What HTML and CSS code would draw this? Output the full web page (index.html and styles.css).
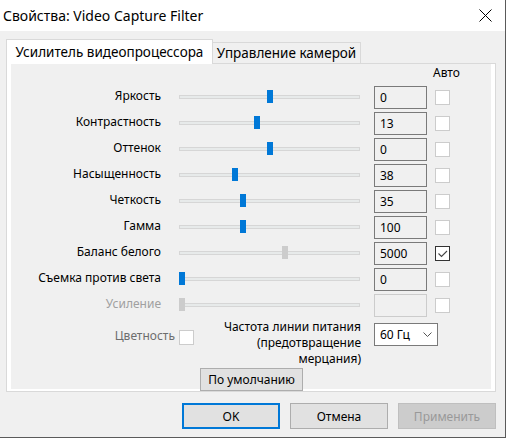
FILE: index.html
```html
<!DOCTYPE html>
<html lang="ru">
<head>
<meta charset="utf-8">
<title>Свойства: Video Capture Filter</title>
<link rel="stylesheet" href="styles.css">
</head>
<body>
<div class="window">
  <div class="titlebar">
    <span class="title">Свойства: Video Capture Filter</span>
    <svg class="close" width="13" height="13" viewBox="0 0 13 13"><path d="M0.5 0.5 L12.5 12.5 M12.5 0.5 L0.5 12.5" stroke="#000" stroke-width="1" fill="none"/></svg>
  </div>
  <div class="client">
    <div class="tabs">
      <div class="tab active">Усилитель видеопроцессора</div>
      <div class="tab">Управление камерой</div>
    </div>
    <div class="panel">
      <div class="page">
        <div class="auto-head">Авто</div>
        <div class="rows">
          <div class="row"><div class="label">Яркость</div><div class="slider"><div class="track"><div class="thumb" style="--v:50"></div></div></div><div class="edit">0</div><div class="cb"></div></div>
          <div class="row"><div class="label">Контрастность</div><div class="slider"><div class="track"><div class="thumb" style="--v:43"></div></div></div><div class="edit">13</div><div class="cb"></div></div>
          <div class="row"><div class="label">Оттенок</div><div class="slider"><div class="track"><div class="thumb" style="--v:50"></div></div></div><div class="edit">0</div><div class="cb"></div></div>
          <div class="row"><div class="label">Насыщенность</div><div class="slider"><div class="track"><div class="thumb" style="--v:30"></div></div></div><div class="edit">38</div><div class="cb"></div></div>
          <div class="row"><div class="label">Четкость</div><div class="slider"><div class="track"><div class="thumb" style="--v:35"></div></div></div><div class="edit">35</div><div class="cb"></div></div>
          <div class="row"><div class="label">Гамма</div><div class="slider"><div class="track"><div class="thumb" style="--v:35"></div></div></div><div class="edit">100</div><div class="cb"></div></div>
          <div class="row"><div class="label">Баланс белого</div><div class="slider"><div class="track"><div class="thumb off" style="--v:59"></div></div></div><div class="edit">5000</div><div class="cb checked"><svg width="13" height="13" viewBox="0 0 13 13"><path d="M2.5 6.5 L5.5 9.5 L11 4" stroke="#444" stroke-width="1.1" fill="none"/></svg></div></div>
          <div class="row"><div class="label">Съемка против света</div><div class="slider"><div class="track"><div class="thumb" style="--v:0"></div></div></div><div class="edit">0</div><div class="cb"></div></div>
          <div class="row"><div class="label disabled">Усиление</div><div class="slider"><div class="track"><div class="thumb off" style="--v:0"></div></div></div><div class="edit disabled"></div><div class="cb"></div></div>
        </div>
        <div class="bottom">
          <div class="chroma"><span class="chroma-label">Цветность</span><div class="cb"></div></div>
          <div class="freq">Частота линии питания<br>(предотвращение<br>мерцания)</div>
          <div class="select"><span>60 Гц</span><svg class="chev" width="9" height="5" viewBox="0 0 9 5"><path d="M0.5 0.5 L4.5 4.5 L8.5 0.5" stroke="#555" stroke-width="1" fill="none"/></svg></div>
        </div>
        <button class="btn defaults">По умолчанию</button>
      </div>
    </div>
    <div class="actions">
      <button class="btn primary">OK</button>
      <button class="btn">Отмена</button>
      <button class="btn disabled-btn">Применить</button>
    </div>
  </div>
</div>
</body>
</html>
```
FILE: styles.css
```css
html, body {
  margin: 0;
  padding: 0;
  background: #ffffff;
}
body {
  font-family: "Noto Sans", "Open Sans", sans-serif;
  font-size: 12px;
  color: #000;
}
.window {
  width: 505px;
  height: 437px;
  border-right: 1px solid #5a5a5a;
  border-bottom: 1px solid #5a5a5a;
  display: flex;
  flex-direction: column;
}
.titlebar {
  height: 31px;
  background: #ffffff;
  display: flex;
  align-items: center;
  flex-shrink: 0;
}
.title {
  font-size: 14px;
  padding-left: 3px;
  line-height: 30px;
}
.close {
  margin-left: auto;
  margin-right: 13px;
  margin-top: -1px;
}
.client {
  flex: 1;
  background: #f0f0f0;
  padding: 8px 9px 0 6px;
}
.tabs {
  display: flex;
  align-items: flex-end;
  height: 25px;
  margin-bottom: -1px;
  position: relative;
  z-index: 1;
  font-size: 13.5px;
}
.tab {
  box-sizing: border-box;
  height: 22px;
  width: 148px;
  border: 1px solid #d9d9d9;
  border-left: none;
  background: #f0f0f0;
  display: flex;
  align-items: center;
  justify-content: center;
  white-space: nowrap;
}
.tab.active {
  height: 25px;
  width: 207px;
  border: 1px solid #d9d9d9;
  border-bottom: none;
  background: #ffffff;
  padding-bottom: 1px;
}
.panel {
  box-sizing: border-box;
  height: 329px;
  border: 1px solid #d9d9d9;
  background: #ffffff;
  padding: 0 4px 2px 4px;
}
.page {
  height: 100%;
  background: #f0f0f0;
}
.auto-head {
  height: 22px;
  line-height: 18px;
  padding-left: 422px;
}
.row {
  display: flex;
  align-items: center;
  height: 23px;
  margin-bottom: 3px;
}
.label {
  width: 150px;
  text-align: right;
  white-space: nowrap;
  line-height: 20px;
  align-self: flex-start;
}
.label.disabled {
  color: #a0a0a0;
}
.slider {
  margin-left: 18px;
  width: 181px;
  display: flex;
  align-items: center;
  height: 23px;
}
.track {
  position: relative;
  box-sizing: border-box;
  width: 181px;
  height: 4px;
  border: 1px solid #d6d6d6;
  background: #e7eaea;
  margin-top: -2px;
}
.thumb {
  position: absolute;
  top: 50%;
  width: 6px;
  height: 13px;
  margin-top: -6.5px;
  left: calc(var(--v) * 1.75px - 1px);
  background: #0078d7;
}
.thumb.off {
  background: #cccccc;
}
.edit {
  box-sizing: border-box;
  margin-left: 14px;
  width: 53px;
  height: 23px;
  border: 1px solid #7a7a7a;
  background: #f0f0f0;
  padding-left: 5px;
  line-height: 21px;
}
.edit.disabled {
  border-color: #cccccc;
}
.cb {
  box-sizing: border-box;
  width: 15px;
  height: 15px;
  border: 1px solid #cccccc;
  background: #ffffff;
  flex-shrink: 0;
}
.row .cb {
  margin-left: 8px;
}
.cb.checked {
  border-color: #333333;
}
.cb svg {
  display: block;
}
.bottom {
  display: flex;
  align-items: flex-start;
  height: 48px;
  margin-top: -1px;
}
.chroma {
  width: 183px;
  display: flex;
  justify-content: flex-end;
  align-items: center;
  gap: 4px;
  padding-top: 11px;
  line-height: 16px;
}
.chroma-label {
  color: #6d6d6d;
  margin-top: -3px;
}
.freq {
  width: 167px;
  text-align: right;
  line-height: 16px;
  white-space: nowrap;
}
.select {
  box-sizing: border-box;
  margin-left: 13px;
  margin-top: 4px;
  width: 64px;
  height: 23px;
  border: 1px solid #7a7a7a;
  background: #ffffff;
  display: flex;
  align-items: center;
  padding-left: 5px;
}
.chev {
  margin-left: auto;
  margin-right: 5px;
}
.btn {
  box-sizing: border-box;
  font-family: inherit;
  font-size: 12px;
  color: #000;
  background: #e1e1e1;
  border: 1px solid #adadad;
  padding: 0;
  margin: 0;
}
.defaults {
  display: block;
  margin-left: 189px;
  margin-top: 1px;
  width: 103px;
  height: 23px;
}
.actions {
  display: flex;
  justify-content: flex-end;
  gap: 10px;
  margin-top: 11px;
  padding-right: 0;
}
.actions .btn {
  width: 98px;
  height: 26px;
}
.actions .btn.primary {
  border: 2px solid #0078d7;
}
.actions .btn.disabled-btn {
  background: #cccccc;
  border-color: #bfbfbf;
  color: #999999;
}
```
